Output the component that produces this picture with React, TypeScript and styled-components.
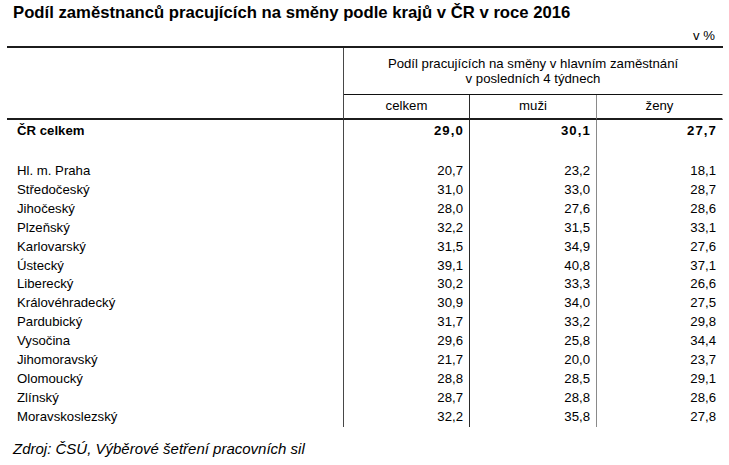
import React from "react";
import styled, { createGlobalStyle } from "styled-components";

interface IRegion {
  name: string;
  total: string;
  men: string;
  women: string;
}

const regions: IRegion[] = [
  { name: "Hl. m. Praha", total: "20,7", men: "23,2", women: "18,1" },
  { name: "Středočeský", total: "31,0", men: "33,0", women: "28,7" },
  { name: "Jihočeský", total: "28,0", men: "27,6", women: "28,6" },
  { name: "Plzeňský", total: "32,2", men: "31,5", women: "33,1" },
  { name: "Karlovarský", total: "31,5", men: "34,9", women: "27,6" },
  { name: "Ústecký", total: "39,1", men: "40,8", women: "37,1" },
  { name: "Liberecký", total: "30,2", men: "33,3", women: "26,6" },
  { name: "Královéhradecký", total: "30,9", men: "34,0", women: "27,5" },
  { name: "Pardubický", total: "31,7", men: "33,2", women: "29,8" },
  { name: "Vysočina", total: "29,6", men: "25,8", women: "34,4" },
  { name: "Jihomoravský", total: "21,7", men: "20,0", women: "23,7" },
  { name: "Olomoucký", total: "28,8", men: "28,5", women: "29,1" },
  { name: "Zlínský", total: "28,7", men: "28,8", women: "28,6" },
  { name: "Moravskoslezský", total: "32,2", men: "35,8", women: "27,8" },
];

const columnBorders = ["#474747", "#2a2a2a", "#8a8a8a", "transparent"];

const GlobalStyle = createGlobalStyle`
  body {
    margin: 0;
    background: #fff;
    color: #000;
    font-family: "Liberation Sans", Arial, sans-serif;
  }
`;

const Page = styled.div`
  width: 729px;
  height: 465px;
  overflow: hidden;
`;

const Title = styled.h1`
  margin: 0;
  padding-left: 13px;
  font-size: 16.7px;
  font-weight: bold;
  line-height: 26px;
`;

const Unit = styled.div`
  width: 723px;
  box-sizing: border-box;
  padding-right: 8px;
  text-align: right;
  font-size: 13.2px;
  line-height: 20px;
`;

const Table = styled.table`
  margin-left: 7px;
  width: 716px;
  table-layout: fixed;
  border-collapse: separate;
  border-spacing: 0;
  border-top: 2px solid #1c1c1c;
  font-size: 13.2px;
`;

const Cell = styled.td<{ $col: number }>`
  box-sizing: border-box;
  padding: 0;
  border-right: 1px solid ${(p) => columnBorders[p.$col]};
`;

const GroupHead = styled(Cell)`
  height: 47px;
  border-bottom: 1px solid #111;
  text-align: center;
  line-height: 15px;
`;

const ColumnHead = styled(Cell)`
  height: 25px;
  padding-bottom: 2px;
  border-bottom: 2px solid #1c1c1c;
  text-align: center;
  line-height: 15px;
`;

const CornerHead = styled(Cell)`
  border-bottom: 2px solid #1c1c1c;
`;

const Label = styled(Cell)<{ $bold?: boolean; $height: number }>`
  height: ${(p) => p.$height}px;
  padding-left: 10px;
  line-height: ${(p) => p.$height}px;
  font-weight: ${(p) => (p.$bold ? "bold" : "normal")};
  white-space: nowrap;
`;

const Value = styled(Cell)<{ $bold?: boolean; $height: number }>`
  height: ${(p) => p.$height}px;
  padding-right: ${(p) => (p.$bold ? 5 : 6)}px;
  line-height: ${(p) => p.$height}px;
  text-align: right;
  font-weight: ${(p) => (p.$bold ? "bold" : "normal")};
  letter-spacing: ${(p) => (p.$bold ? "1.1px" : "0")};
`;

const Source = styled.div`
  margin-top: 12px;
  padding-left: 13px;
  font-size: 15px;
  font-style: italic;
  line-height: 20px;
`;

const ROW = 18.9;

const DataRow = ({ item, bold, height }: { item: IRegion; bold?: boolean; height: number }) => (
  <tr>
    <Label $col={0} $bold={bold} $height={height}>
      {item.name}
    </Label>
    <Value $col={1} $bold={bold} $height={height}>
      {item.total}
    </Value>
    <Value $col={2} $bold={bold} $height={height}>
      {item.men}
    </Value>
    <Value $col={3} $bold={bold} $height={height}>
      {item.women}
    </Value>
  </tr>
);

const App = () => (
  <Page>
    <GlobalStyle />
    <Title>Podíl zaměstnanců pracujících na směny podle krajů v ČR v roce 2016</Title>
    <Unit>v %</Unit>
    <Table>
      <colgroup>
        <col style={{ width: 337 }} />
        <col style={{ width: 126 }} />
        <col style={{ width: 127 }} />
        <col style={{ width: 126 }} />
      </colgroup>
      <thead>
        <tr>
          <CornerHead $col={0} rowSpan={2} />
          <GroupHead $col={3} colSpan={3}>
            Podíl pracujících na směny v hlavním zaměstnání
            <br />v posledních 4 týdnech
          </GroupHead>
        </tr>
        <tr>
          <ColumnHead $col={1}>celkem</ColumnHead>
          <ColumnHead $col={2}>muži</ColumnHead>
          <ColumnHead $col={3}>ženy</ColumnHead>
        </tr>
      </thead>
      <tbody>
        <DataRow item={{ name: "ČR celkem", total: "29,0", men: "30,1", women: "27,7" }} bold height={21} />
        <tr>
          <Label $col={0} $height={21} />
          <Value $col={1} $height={21} />
          <Value $col={2} $height={21} />
          <Value $col={3} $height={21} />
        </tr>
        {regions.map((item) => (
          <DataRow key={item.name} item={item} height={ROW} />
        ))}
      </tbody>
    </Table>
    <Source>Zdroj: ČSÚ, Výběrové šetření pracovních sil</Source>
  </Page>
);

export default App;
